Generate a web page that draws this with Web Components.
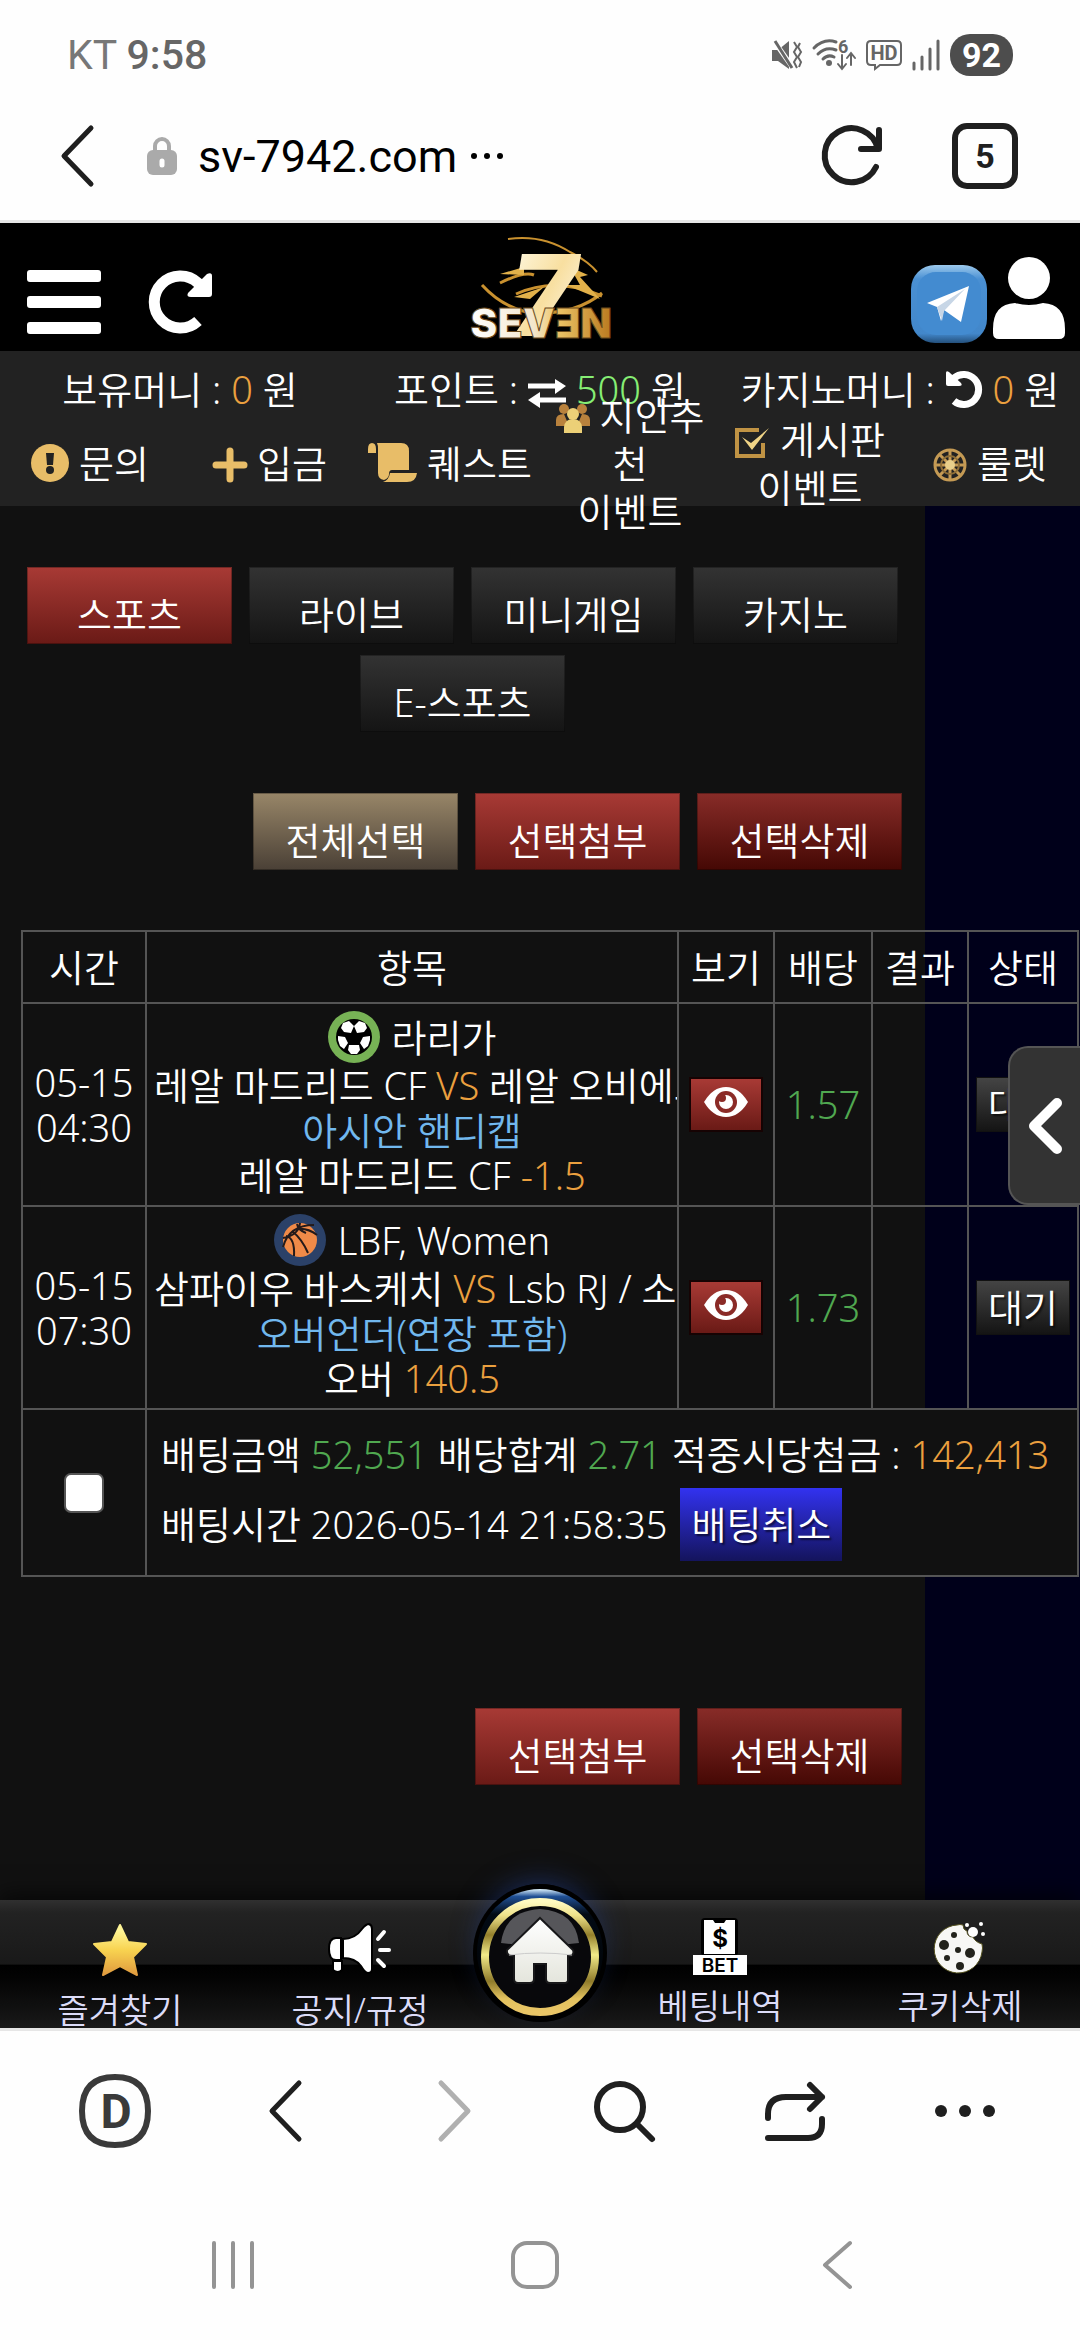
<!DOCTYPE html>
<html lang="ko">
<head>
<meta charset="utf-8">
<meta name="viewport" content="width=device-width, initial-scale=1">
<title>SEVEN</title>
<style>
  body {
    margin: 0;
    background: #fefefe;
    color: #fff;
    font-family: "Noto Sans", "Noto Sans CJK KR", sans-serif;
    font-weight: 350;
    font-size: 38px;
    line-height: 45px;
  }
</style>
</head>
<body>
<phone-screen></phone-screen>

<script>
// name: [width, height, markup]
const ICONS = {
  mute: [31, 30, `<path d="M1 10h6L18 1v28L7 21H1z" fill="#666"/><path d="M3 1l19 27" stroke="#fefefe" stroke-width="5"/><path d="M4 1l17 27" stroke="#666" stroke-width="3"/><path d="M23 2l3 5-3 5 3 5-3 5 3 6M29 3l-2 4 3 5-3 5 3 5-2 5" fill="none" stroke="#666" stroke-width="2"/>`],
  wifi: [44, 32, `<g fill="none" stroke="#666" stroke-width="3" stroke-linecap="round"><path d="M2 9Q12-1 24 3M6 15q8-8 18-4M11 20q5-5 11-2"/><path d="M30 16v13M26 25l4 5 4-5M39 26V15M35 19l4-5 4 5" stroke-width="2"/></g><circle cx="17" cy="24" r="3" fill="#666"/><text x="26" y="14" font-family="Roboto" font-weight="700" font-size="18" fill="#666">6</text>`],
  hd: [36, 32, `<path d="M5 2h26q4 0 4 4v16q0 4-4 4H14l-5 4v-4H5q-4 0-4-4V6q0-4 4-4z" fill="none" stroke="#666" stroke-width="2"/><text x="18" y="21" text-anchor="middle" font-family="Roboto" font-weight="700" font-size="20" fill="#666">HD</text>`],
  signal: [28, 30, `<path d="M2 23v6M10 17v12M18 9v20M26 1v28" stroke="#666" stroke-width="3" stroke-linecap="round"/>`],
  back: [34, 62, `<path d="M31 3L4 31l27 28" fill="none" stroke="currentColor" stroke-width="5" stroke-linecap="round" stroke-linejoin="round"/>`],
  forward: [34, 62, `<path d="M3 3l27 28L3 59" fill="none" stroke="currentColor" stroke-width="5" stroke-linecap="round" stroke-linejoin="round"/>`],
  lock: [32, 38, `<path d="M9 16V9a7 7 0 0 1 14 0v7" fill="none" stroke="#aaa" stroke-width="4"/><rect x="1" y="13" width="30" height="25" rx="6" fill="#aaa"/><path d="M16 24v4" stroke="#fff" stroke-width="5" stroke-linecap="round"/>`],
  more: [32, 6, `<g fill="currentColor"><circle cx="3" cy="3" r="3"/><circle cx="16" cy="3" r="3"/><circle cx="29" cy="3" r="3"/></g>`],
  refresh: [62, 62, `<path d="M54 42A27 27 0 1 1 56 24M57 5v19H39" fill="none" stroke="currentColor" stroke-width="6" stroke-linecap="round" stroke-linejoin="round"/>`],
  bars: [74, 64, `<g fill="#fff"><rect width="74" height="12" rx="3"/><rect y="26" width="74" height="12" rx="3"/><rect y="52" width="74" height="12" rx="3"/></g>`],
  redo: [64, 64, `<path d="M49 51A26 26 0 1 1 49 13l4 4" fill="none" stroke="#fff" stroke-width="11"/><path d="M58 4q5-2 5 2v18q0 3-3 3H42q-5 0-3-4z" fill="#fff"/>`],
  undo: [38, 38, `<path d="M9 31A15 15 0 1 0 9 8l-3 3" fill="none" stroke="#fff" stroke-width="7"/><path d="M1 3q0-3 3-1l12 11q2 3-2 3H3q-2 0-2-2z" fill="#fff"/>`],
  user: [72, 82, `<g fill="#fff"><circle cx="36" cy="21" r="21"/><path d="M22 46q14 4 28 0 22 1 22 26v4q0 6-6 6H6q-6 0-6-6v-4q0-25 22-26z"/></g>`],
  telegram: [76, 78, `<defs><linearGradient id="t" x2="0" y2="1"><stop stop-color="#9cc9ec"/><stop offset=".18" stop-color="#4a90d3"/><stop offset=".88" stop-color="#4287ca"/><stop offset="1" stop-color="#24507c"/></linearGradient></defs><rect width="76" height="78" rx="24" fill="url(#t)"/><rect x="6" y="7" width="64" height="63" rx="19" fill="#438bd0"/><path d="M16 38l42-17-8 36-17-12-3 11-4-14z" fill="#fff"/><path d="M26 42l28-18-21 22-2 10z" fill="#c7d6e6"/>`],
  swap: [38, 30, `<path d="M0 8h28M38 22H11" stroke="#fff" stroke-width="5"/><path d="M27 1l11 7-11 8zM12 14L0 22l12 8z" fill="#fff"/>`],
  info: [38, 38, `<circle cx="19" cy="19" r="19" fill="#e8bd68"/><path d="M15 9h8l-1 12h-6z" fill="#222"/><circle cx="19" cy="26" r="4" fill="#222"/>`],
  plus: [34, 34, `<path d="M17 3v28M3 17h28" stroke="#e8bd68" stroke-width="7" stroke-linecap="round"/>`],
  scroll: [49, 39, `<g fill="#e8bd68"><path d="M0 10V6q0-6 4-6t4 6v4z"/><path d="M9 0h24q8 0 8 8v19H24q-3 0-3 4t-5 6q-6-1-6-7V6q0-4-1-6z"/><path d="M22 30h27q-1 9-10 9H15q6-2 7-9z"/></g>`],
  people: [34, 30, `<g fill="#b9823d"><circle cx="8" cy="5" r="5"/><circle cx="26" cy="5" r="5"/><path d="M0 22V16q0-6 8-6l5 12zM34 22v-6q0-6-8-6l-5 12z"/></g><g fill="#ecd077"><circle cx="17" cy="10" r="6"/><path d="M8 29v-6q1-8 9-8t9 8v6z"/></g>`],
  check: [35, 30, `<path d="M28 15v13H2V2h22" fill="none" stroke="#c09344" stroke-width="4"/><path d="M7 9l9 6L34 0 17 22z" fill="#f0d486"/>`],
  wheel: [34, 34, `<g fill="none" stroke="#c49a54"><circle cx="17" cy="17" r="15" stroke-width="3"/><path d="M17 2v30M2 17h30M6 6l22 22M28 6L6 28" stroke-width="3"/><circle cx="17" cy="17" r="9" stroke-width="2" stroke="#8f6f38"/></g><circle cx="17" cy="17" r="5" fill="#e8cf8b"/>`],
  soccer: [52, 52, `<circle cx="26" cy="26" r="26" fill="#77b255"/><circle cx="26" cy="26" r="18" fill="#000"/><g fill="#fff"><path d="M15 12l6-2 5 5-3 7-7-1-3-4zM37 12l-6-2-5 5 3 7 7-1 3-4zM10 25l7 1 3 6-4 6-4-3-2-6zM42 25l-7 1-3 6 4 6 4-3 2-6zM21 34h10l1 5-3 4h-6l-3-4z"/></g>`],
  basket: [52, 52, `<circle cx="26" cy="26" r="26" fill="#2b4168"/><circle cx="26" cy="26" r="17" fill="#f08a48"/><g fill="none" stroke="#241a1a" stroke-width="2"><path d="M9 24q16-3 17-15M9 33q6-22 31-22M12 22q9 2 8 20M18 17q10 8 16 22M24 15q10-1 19 6M23 10q1 6 9 9"/></g>`],
  eye: [44, 30, `<path d="M0 15Q9 0 22 0t22 15Q35 30 22 30T0 15z" fill="#fff"/><circle cx="22" cy="15" r="11" fill="#8b2b27"/><circle cx="22" cy="15" r="7" fill="#fff"/><circle cx="18" cy="11" r="4" fill="#8b2b27"/>`],
  angle: [34, 56, `<path d="M29 5L6 28l23 23" fill="none" stroke="#fff" stroke-width="10" stroke-linecap="round" stroke-linejoin="round"/>`],
  star: [54, 52, `<defs><linearGradient id="s" x2="0" y2="1"><stop offset=".1" stop-color="#fff596"/><stop offset=".5" stop-color="#f8d350"/><stop offset="1" stop-color="#e09a3e"/></linearGradient></defs><path d="M27 1l8 17 18 2-13 13 4 18-17-9-17 9 4-18L1 20l18-2z" fill="url(#s)" stroke="url(#s)" stroke-width="2" stroke-linejoin="round"/>`],
  horn: [62, 52, `<g fill="#fff" stroke="#000" stroke-width="2"><path d="M7 14h5v22H7q-7 0-7-11T7 14zM14 15Q26 15 33 5q4-5 7-5 3 1 3 5v40q0 4-4 4-3 0-7-7-6-8-18-8zM4 37h9v9q-4 4-9 0z"/></g><path d="M49 15l6-7M51 26h9M49 36l6 6" stroke="#fff" stroke-width="4" stroke-linecap="round"/>`],
  bet: [54, 58, `<rect x="8" y="0" width="37" height="38" rx="4" fill="#000"/><path d="M11 2h9l2 3h9l2-3h9v34H11z" fill="#fff"/><text x="27" y="29" text-anchor="middle" font-family="Inter" font-weight="700" font-size="24" fill="#000">$</text><rect x="0" y="37" width="54" height="20" fill="#fff"/><text x="27" y="54" text-anchor="middle" font-family="Inter" font-weight="600" font-size="19" fill="#000">BET</text>`],
  cookie: [54, 56, `<path d="M24 5q3-1 6 0 0 5 4 6 0 6 6 6 2 5 9 7 1 4 0 8A24 24 0 1 1 24 5z" fill="#f7f7f5" stroke="#55521f" stroke-width="1"/><g fill="#23231c"><circle cx="11" cy="25" r="5"/><circle cx="21" cy="15" r="3"/><circle cx="25" cy="30" r="3"/><circle cx="37" cy="33" r="5"/><circle cx="14" cy="38" r="3"/><circle cx="27" cy="46" r="4"/></g><g fill="#fff"><circle cx="40" cy="12" r="5"/><circle cx="34" cy="5" r="2"/><circle cx="48" cy="4" r="2"/><circle cx="50" cy="14" r="2"/></g>`],
  home: [134, 138, `<defs><linearGradient id="g" x2="0" y2="1"><stop stop-color="#fffac0"/><stop offset=".12" stop-color="#efe28a"/><stop offset=".3" stop-color="#94802c"/><stop offset=".48" stop-color="#f2ea88"/><stop offset=".72" stop-color="#8f7b2b"/><stop offset=".88" stop-color="#e3c25f"/><stop offset="1" stop-color="#e9c566"/></linearGradient><linearGradient id="b" x2="0" y2="1"><stop stop-color="#dff4ff"/><stop offset=".06" stop-color="#1f4f94"/><stop offset=".2" stop-color="#020a14"/><stop offset="1" stop-color="#000"/></linearGradient><linearGradient id="w" x2="0" y2="1"><stop stop-color="#fff"/><stop offset="1" stop-color="#e4e5dc"/></linearGradient></defs><ellipse cx="67" cy="69" rx="67" ry="69" fill="#000"/><circle cx="67" cy="68" r="63" fill="url(#b)"/><circle cx="67" cy="73" r="55" fill="#08080b" stroke="url(#g)" stroke-width="8"/><path d="M28 59Q32 27 67 25q35 2 39 34-39 5-78 0z" fill="#56565a"/><path d="M67 34l33 32q2 6-5 6v24q0 3-4 3H77q-4 0-4-4V80H61v15q0 4-4 4H45q-4 0-4-4V72q-8 0-7-6z" fill="url(#w)" stroke="#18181a" stroke-width="2"/><path d="M36 71q31-4 63 0" stroke="#ccc" fill="none"/>`],
  dee: [72, 74, `<path d="M36 3q33 0 33 34T36 71 3 37 36 3z" fill="none" stroke="#3a3a3a" stroke-width="6"/><text x="37" y="54" text-anchor="middle" font-family="Roboto" font-weight="700" font-size="48" fill="#3a3a3a">D</text>`],
  search: [62, 62, `<g fill="none" stroke="#1f1f1f" stroke-width="6" stroke-linecap="round"><circle cx="26" cy="27" r="23"/><path d="M43 44l15 15"/></g>`],
  share: [62, 62, `<path d="M4 38v-4q0-17 18-17h36M46 5l12 12-12 12M4 58h40q14 0 14-14v-5" fill="none" stroke="#1f1f1f" stroke-width="6" stroke-linecap="round" stroke-linejoin="round"/>`],
  dots: [62, 14, `<g fill="#1f1f1f"><circle cx="7" cy="7" r="6"/><circle cx="31" cy="7" r="6"/><circle cx="55" cy="7" r="6"/></g>`],
  recents: [44, 48, `<path d="M3 2v44M22 2v44M41 2v44" stroke="#949494" stroke-width="4" stroke-linecap="round"/>`],
  homekey: [50, 50, `<rect x="3" y="3" width="44" height="44" rx="14" fill="none" stroke="#949494" stroke-width="4"/>`],
  backkey: [30, 50, `<path d="M28 3L3 25l25 22" fill="none" stroke="#949494" stroke-width="4" stroke-linecap="round" stroke-linejoin="round"/>`],
  logo: [142, 104, `<defs><linearGradient id="l"><stop stop-color="#fff"/><stop offset=".45" stop-color="#f3e6cc"/><stop offset=".6" stop-color="#efc76a"/><stop offset="1" stop-color="#b9791f"/></linearGradient><linearGradient id="m" x1="0" y1="0" x2="1" y2="1"><stop stop-color="#fffdf0"/><stop offset=".5" stop-color="#f8dfa0"/><stop offset="1" stop-color="#fff"/></linearGradient></defs><g fill="none" stroke="#c9912f"><path d="M38 2Q72-3 100 15q18 9 27 20" stroke-width="2"/><path d="M12 48q20 22 48 28 46 2 72-20" stroke-width="3"/><path d="M30 46q24-12 34-8M46 57q40-18 86 2" stroke-width="3"/></g><path d="M30 37l24-7v8zM100 30l18 8-8 2 20 22-34-14 14 0zM44 60l30-10-14 12z" fill="#e2b14a"/><text x="73" y="99" text-anchor="middle" font-family="Inter" font-style="italic" font-weight="800" font-size="113" fill="url(#m)">7</text><text x="71" y="101" text-anchor="middle" font-family="Inter" font-weight="900" font-size="41" fill="url(#l)" stroke="#6b4a1c" stroke-width="1">SEVƎN</text>`]
};

class AppIcon extends HTMLElement {
  constructor() {
    super();
    this.attachShadow({ mode: 'open' });
  }

  connectedCallback() {
    const [w, h, body] = ICONS[this.getAttribute('name')];
    this.shadowRoot.innerHTML = `
      <style>
        :host { display: inline-block; flex: none; line-height: 0; }
        svg { display: block; overflow: visible; }
      </style>
      <svg width="${w}" height="${h}" viewBox="0 0 ${w} ${h}" aria-hidden="true">${body}</svg>
    `;
  }
}

class StatusBar extends HTMLElement {
  constructor() {
    super();
    this.attachShadow({ mode: 'open' });
    this.shadowRoot.innerHTML = `
      <style>
        :host {
          display: flex;
          justify-content: space-between;
          align-items: center;
          height: 110px;
          padding: 0 67px;
          box-sizing: border-box;
          font-family: Roboto, sans-serif;
          font-size: 41px;
          font-weight: 400;
          color: #777;
        }
        b { font-weight: 500; color: #666; }
        .icons { display: flex; align-items: center; gap: 10px; }
        .battery {
          background: #4d4d4d;
          color: #fff;
          font-size: 34px;
          font-weight: 700;
          line-height: 42px;
          padding: 0 12px;
          border-radius: 20px;
        }
      </style>
      <span>KT <b>9:58</b></span>
      <span class="icons">
        <app-icon name="mute"></app-icon>
        <app-icon name="wifi"></app-icon>
        <app-icon name="hd"></app-icon>
        <app-icon name="signal"></app-icon>
        <span class="battery">92</span>
      </span>
    `;
  }
}

class AddressBar extends HTMLElement {
  constructor() {
    super();
    this.attachShadow({ mode: 'open' });
    this.shadowRoot.innerHTML = `
      <style>
        :host {
          display: flex;
          align-items: center;
          height: 113px;
          padding: 0 62px 18px 60px;
          box-sizing: border-box;
          border-bottom: 3px solid #e6e6e6;
          color: #1f1f1f;
        }
        button {
          display: flex;
          align-items: center;
          background: none;
          border: 0;
          padding: 0;
          color: inherit;
          font: 400 45px Roboto, sans-serif;
        }
        .url { margin: 0 auto 0 52px; gap: 14px; color: #000; }
        .url app-icon:first-child { margin-right: 6px; }
        .tabs {
          justify-content: center;
          width: 66px;
          height: 66px;
          margin-left: 68px;
          border: 6px solid #1f1f1f;
          border-radius: 15px;
          font-size: 34px;
          font-weight: 700;
          box-sizing: border-box;
        }
      </style>
      <button aria-label="뒤로"><app-icon name="back"></app-icon></button>
      <button class="url"><app-icon name="lock"></app-icon>sv-7942.com<app-icon name="more"></app-icon></button>
      <button aria-label="새로고침"><app-icon name="refresh"></app-icon></button>
      <button class="tabs">5</button>
    `;
  }
}

class SiteHeader extends HTMLElement {
  constructor() {
    super();
    this.attachShadow({ mode: 'open' });
    this.shadowRoot.innerHTML = `
      <style>
        :host {
          display: grid;
          grid-template-columns: 1fr auto 1fr;
          align-items: center;
          height: 128px;
          padding: 0 15px 0 27px;
          box-sizing: border-box;
          background: #000;
        }
        div { display: flex; align-items: center; gap: 48px; padding-top: 30px; }
        .right { justify-content: flex-end; gap: 6px; padding-top: 34px; }
        .right app-icon[name="user"] { margin-bottom: 12px; }
        button { background: none; border: 0; padding: 0; display: block; }
        a { padding: 8px 10px 0 0; }
      </style>
      <div>
        <button aria-label="메뉴"><app-icon name="bars"></app-icon></button>
        <button aria-label="새로고침"><app-icon name="redo"></app-icon></button>
      </div>
      <a href="#" aria-label="SEVEN"><app-icon name="logo"></app-icon></a>
      <div class="right">
        <button aria-label="텔레그램"><app-icon name="telegram"></app-icon></button>
        <button aria-label="내 정보"><app-icon name="user"></app-icon></button>
      </div>
    `;
  }
}

class InfoBar extends HTMLElement {
  constructor() {
    super();
    this.attachShadow({ mode: 'open' });
    this.shadowRoot.innerHTML = `
      <style>
        :host { display: block; position: relative; z-index: 1; background: #222; }
        .money {
          display: grid;
          grid-template-columns: repeat(3, 1fr);
          height: 76px;
          align-items: center;
          text-align: center;
          white-space: nowrap;
        }
        .menu {
          display: grid;
          grid-template-columns: repeat(6, 1fr);
          height: 71px;
          padding-bottom: 8px;
          align-items: center;
          text-align: center;
        }
        /* long labels wrap and spill over the row on purpose */
        .menu a { line-height: 48px; word-break: break-all; margin: -40px 0; color: #fff; text-decoration: none; }
        app-icon { vertical-align: -4px; }
        .orange { color: #eba03f; }
        .green { color: #86ee74; }
      </style>
      <div class="money">
        <span>보유머니 : <span class="orange">0</span> 원</span>
        <span>포인트 : <app-icon name="swap"></app-icon> <span class="green">500</span> 원</span>
        <span>카지노머니 : <app-icon name="undo"></app-icon> <span class="orange">0</span> 원</span>
      </div>
      <nav class="menu">
        <a href="#"><app-icon name="info"></app-icon> 문의</a>
        <a href="#"><app-icon name="plus"></app-icon> 입금</a>
        <a href="#"><app-icon name="scroll"></app-icon> 퀘스트</a>
        <a href="#"><app-icon name="people"></app-icon> 지인추천<br>이벤트</a>
        <a href="#"><app-icon name="check"></app-icon> 게시판<br>이벤트</a>
        <a href="#"><app-icon name="wheel"></app-icon> 룰렛</a>
      </nav>
    `;
  }
}

class SiteButton extends HTMLElement {
  constructor() {
    super();
    this.attachShadow({ mode: 'open' });
    this.shadowRoot.innerHTML = `
      <style>
        :host { display: block; --from: #333; --to: #141414; }
        :host([kind="red"]) { --from: #a83a35; --to: #6a1a16; }
        :host([kind="dark"]) { --from: #882c28; --to: #450804; }
        :host([kind="gold"]) { --from: #988668; --to: #4a4036; }
        button {
          display: block;
          width: 205px;
          height: 77px;
          padding: 18px 0 0;
          border: 1px solid rgba(0, 0, 0, 0.3);
          background: linear-gradient(var(--from), var(--to)) border-box;
          color: #fff;
          font: inherit;
        }
      </style>
      <button><slot></slot></button>
    `;
  }
}

class BetTable extends HTMLElement {
  constructor() {
    super();
    this.attachShadow({ mode: 'open' });

    this.bets = [
      { date: '05-15', time: '04:30', icon: 'soccer', league: '라리가', home: '레알 마드리드 CF', away: '레알 오비에도', market: '아시안 핸디캡', pick: '레알 마드리드 CF', line: '-1.5', odds: '1.57' },
      { date: '05-15', time: '07:30', icon: 'basket', league: 'LBF, Women', home: '삼파이우 바스케치', away: 'Lsb RJ / 소디에', market: '오버언더(연장 포함)', pick: '오버', line: '140.5', odds: '1.73' }
    ];

    this.shadowRoot.innerHTML = `
      <style>
        :host { display: block; position: relative; }
        table {
          width: calc(100% - 22px);
          margin-left: 21px;
          border-collapse: collapse;
          table-layout: fixed;
          text-align: center;
        }
        th, td { border: 2px solid #555; padding: 0; font-weight: inherit; overflow: hidden; white-space: nowrap; }
        th { height: 70px; }
        td.item { padding: 7px; }
        .league { display: flex; align-items: center; justify-content: center; gap: 12px; height: 52px; }
        .orange { color: #eba03f; }
        .green { color: #50a850; }
        .blue { color: #71b8ee; }
        button {
          border: 1px solid #111;
          padding: 0;
          color: #fff;
          font: inherit;
          text-shadow: 2px 2px 2px rgba(0, 0, 0, 0.6);
          vertical-align: middle;
        }
        .view { display: flex; align-items: center; justify-content: center; margin: 0 auto; width: 74px; height: 55px; padding-bottom: 6px; border: 2px solid #160303; background: linear-gradient(#a83a35, #6a1a16); }
        .wait { width: 94px; height: 55px; background: linear-gradient(#444, #141414); }
        .cancel { width: 164px; height: 75px; background: linear-gradient(#3232f0, #14145c); }
        td.sum { background: #111; text-align: left; padding: 22px 14px 13px; }
        .when { display: flex; align-items: center; gap: 12px; margin-top: 10px; }
        input { display: block; width: 40px; height: 40px; margin: 0 auto; appearance: none; background: #fff; border: 2px solid #555; border-radius: 7px; }
        .drawer {
          position: absolute;
          right: 0;
          top: 116px;
          display: flex;
          align-items: center;
          justify-content: center;
          width: 72px;
          height: 159px;
          border: 2px solid #555;
          border-right: 0;
          border-radius: 20px 0 0 20px;
          background: #333;
        }
      </style>
      <table>
        <colgroup>
          <col style="width: 124px"><col><col style="width: 96px"><col style="width: 98px"><col style="width: 96px"><col style="width: 110px">
        </colgroup>
        <thead>
          <tr><th>시간</th><th>항목</th><th>보기</th><th>배당</th><th>결과</th><th>상태</th></tr>
        </thead>
        <tbody>
          ${this.bets.map(bet => this.renderBet(bet)).join('')}
          <tr>
            <td><input type="checkbox" aria-label="배팅 선택"></td>
            <td class="sum" colspan="5">
              <div>배팅금액 <span class="green">52,551</span> 배당합계 <span class="green">2.71</span> 적중시당첨금 : <span class="orange">142,413</span></div>
              <div class="when"><span>배팅시간 2026-05-14 21:58:35</span><button class="cancel">배팅취소</button></div>
            </td>
          </tr>
        </tbody>
      </table>
      <button class="drawer" aria-label="열기"><app-icon name="angle"></app-icon></button>
    `;
  }

  renderBet(bet) {
    return `
      <tr>
        <td>${bet.date}<br>${bet.time}</td>
        <td class="item">
          <div class="league"><app-icon name="${bet.icon}"></app-icon>${bet.league}</div>
          <div>${bet.home} <span class="orange">VS</span> ${bet.away}</div>
          <div class="blue">${bet.market}</div>
          <div>${bet.pick} <span class="orange">${bet.line}</span></div>
        </td>
        <td><button class="view" aria-label="보기"><app-icon name="eye"></app-icon></button></td>
        <td class="green">${bet.odds}</td>
        <td></td>
        <td><button class="wait">대기</button></td>
      </tr>
    `;
  }
}

class SiteMain extends HTMLElement {
  constructor() {
    super();
    this.attachShadow({ mode: 'open' });
    this.shadowRoot.innerHTML = `
      <style>
        :host {
          --side: 155px;
          display: block;
          padding: 61px 0 110px;
          background: linear-gradient(#111, #111) no-repeat 0 0 / calc(100% - var(--side)) 100%, #00001a;
        }
        .tabs, .actions { display: flex; flex-wrap: wrap; gap: 11px 17px; margin-right: var(--side); }
        .tabs { justify-content: center; }
        .actions { justify-content: flex-end; padding-right: 23px; }
        .top { margin-top: 61px; margin-bottom: 60px; }
        .bottom { margin-top: 131px; }
      </style>
      <div class="tabs">
        <site-button kind="red">스포츠</site-button>
        <site-button>라이브</site-button>
        <site-button>미니게임</site-button>
        <site-button>카지노</site-button>
        <site-button>E-스포츠</site-button>
      </div>
      <div class="actions top">
        <site-button kind="gold">전체선택</site-button>
        <site-button kind="red">선택첨부</site-button>
        <site-button kind="dark">선택삭제</site-button>
      </div>
      <bet-table></bet-table>
      <div class="actions bottom">
        <site-button kind="red">선택첨부</site-button>
        <site-button kind="dark">선택삭제</site-button>
      </div>
    `;
  }
}

class SiteNav extends HTMLElement {
  constructor() {
    super();
    this.attachShadow({ mode: 'open' });
    this.shadowRoot.innerHTML = `
      <style>
        :host {
          display: grid;
          grid-template-columns: minmax(0, 2fr) minmax(0, 2fr) minmax(0, 1fr) minmax(0, 2fr) minmax(0, 2fr);
          position: relative;
          height: 128px;
          background: linear-gradient(#303030, #222 10%, #191919 50%, #000 51%, #030303 60%, #191919);
          box-shadow: 0 -6px 20px rgba(0, 0, 0, 0.6);
          font-size: 34px;
          line-height: 40px;
        }
        a {
          display: flex;
          flex-direction: column;
          align-items: center;
          justify-content: flex-end;
          gap: 14px;
          color: #dcdcf8;
          text-decoration: none;
        }
        a:not(.high) { margin-bottom: -2px; }
        .high { padding-bottom: 2px; gap: 10px; }
        .home { justify-content: flex-start; }
        .home app-icon { margin-top: -16px; border-radius: 50%; box-shadow: 0 -10px 30px -10px rgba(40, 80, 190, 0.5); }
      </style>
      <a href="#"><app-icon name="star"></app-icon>즐겨찾기</a>
      <a href="#"><app-icon name="horn"></app-icon>공지/규정</a>
      <a href="#" class="home" aria-label="홈"><app-icon name="home"></app-icon></a>
      <a href="#" class="high"><app-icon name="bet"></app-icon>베팅내역</a>
      <a href="#" class="high"><app-icon name="cookie"></app-icon>쿠키삭제</a>
    `;
  }
}

class BrowserTools extends HTMLElement {
  constructor() {
    super();
    this.attachShadow({ mode: 'open' });
    this.shadowRoot.innerHTML = `
      <style>
        :host { display: block; position: relative; background: #fefefe; border-top: 3px solid #e6e6e6; color: #1f1f1f; }
        div { display: grid; align-items: center; justify-items: center; }
        .tools { grid-template-columns: repeat(6, 1fr); height: 162px; padding: 0 30px; }
        .keys { grid-template-columns: repeat(3, 1fr); height: 147px; padding: 0 92px 0 82px; }
        button { background: none; border: 0; padding: 0; color: inherit; display: block; }
        button:disabled { color: #b0b0b0; }
      </style>
      <div class="tools">
        <button aria-label="D"><app-icon name="dee"></app-icon></button>
        <button aria-label="뒤로"><app-icon name="back"></app-icon></button>
        <button aria-label="앞으로" disabled><app-icon name="forward"></app-icon></button>
        <button aria-label="검색"><app-icon name="search"></app-icon></button>
        <button aria-label="공유"><app-icon name="share"></app-icon></button>
        <button aria-label="더보기"><app-icon name="dots"></app-icon></button>
      </div>
      <div class="keys">
        <button aria-label="최근 앱"><app-icon name="recents"></app-icon></button>
        <button aria-label="홈"><app-icon name="homekey"></app-icon></button>
        <button aria-label="뒤로"><app-icon name="backkey"></app-icon></button>
      </div>
    `;
  }
}

class PhoneScreen extends HTMLElement {
  constructor() {
    super();
    this.attachShadow({ mode: 'open' });
    this.shadowRoot.innerHTML = `
      <style>
        :host { display: flex; flex-direction: column; min-height: 100vh; }
        site-main { flex: 1; }
      </style>
      <status-bar></status-bar>
      <address-bar></address-bar>
      <site-header></site-header>
      <info-bar></info-bar>
      <site-main></site-main>
      <site-nav></site-nav>
      <browser-tools></browser-tools>
    `;
  }
}

customElements.define('app-icon', AppIcon);
customElements.define('status-bar', StatusBar);
customElements.define('address-bar', AddressBar);
customElements.define('site-header', SiteHeader);
customElements.define('info-bar', InfoBar);
customElements.define('site-button', SiteButton);
customElements.define('bet-table', BetTable);
customElements.define('site-main', SiteMain);
customElements.define('site-nav', SiteNav);
customElements.define('browser-tools', BrowserTools);
customElements.define('phone-screen', PhoneScreen);
</script>
</body>
</html>
